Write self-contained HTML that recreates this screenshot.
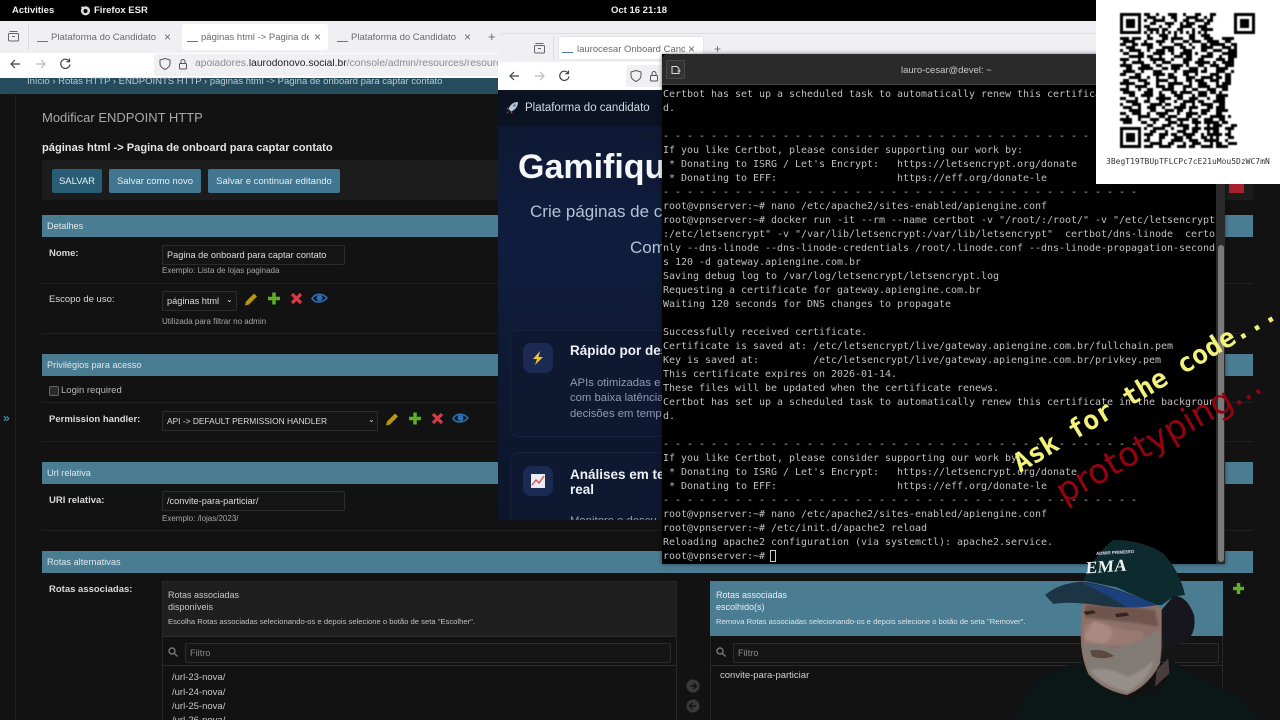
<!DOCTYPE html>
<html lang="pt"><head><meta charset="utf-8"><title>Desktop</title>
<style>
html,body{margin:0;padding:0;width:1280px;height:720px;overflow:hidden;background:#121212}
body{position:relative;font-family:"Liberation Sans",sans-serif;color:#ddd}
.a,.b{position:absolute}
.t{position:absolute;white-space:nowrap;line-height:1;margin-top:1px}
.bar{position:absolute;left:42px;width:1211px;height:22px;background:#4a7c92}
.bar .t{left:5px;top:6px;font-size:9.2px;color:#dfe8ec}
.lab{font-size:9.5px;color:#d8d8d8}
.bold{font-weight:bold}
.hlp{font-size:8px;color:#a8a8a8}
.inp{position:absolute;height:18px;border:1px solid #2c2c2c;background:#151515;border-radius:2px;font-size:9.2px;color:#ddd;line-height:18px;padding-left:4px;box-sizing:content-box;white-space:nowrap;overflow:hidden}
.btn{position:absolute;top:169px;height:24px;background:#417690;border-radius:2px;color:#e8eef1;font-size:9.5px;line-height:26px;text-align:center}
.line{position:absolute;left:42px;width:1211px;height:1px;background:#1f1f1f}
.tab{position:absolute;font-size:9.5px;color:#6a6a70;white-space:nowrap}
.term{position:absolute;left:663px;top:88px;width:552px;height:476px;overflow:hidden;font:10px/14px "DejaVu Sans Mono","Liberation Mono",monospace;letter-spacing:-.02px;color:#bfbfbf;white-space:pre;filter:blur(.25px)}
.ul{position:absolute;width:11px;height:1px;background:#4a7ea8}
</style></head><body>

<!-- admin page background -->
<div class="a" style="left:0;top:94px;width:1280px;height:626px;background:#121212"></div>
<div class="a" style="left:15px;top:94px;width:1px;height:626px;background:#1e1e1e"></div>
<div class="t" style="left:3px;top:411px;font-size:12px;color:#5fb4d6">»</div>

<!-- top bar -->
<div class="a" style="left:0;top:0;width:1280px;height:21px;background:#000"></div>
<div class="t bold" style="left:12px;top:5px;font-size:9.5px;color:#eee">Activities</div>
<svg class="a" style="left:80px;top:5px" width="11" height="11" viewBox="0 0 11 11"><circle cx="5.5" cy="5.8" r="4.6" fill="#ddd"/><circle cx="5.5" cy="6" r="2" fill="#000"/><path d="M2 1l2 2H1z" fill="#ddd"/></svg>
<div class="t bold" style="left:94px;top:5px;font-size:9.5px;color:#eee">Firefox ESR</div>
<div class="t bold" style="left:611px;top:5px;font-size:9.5px;color:#eee">Oct 16 21:18</div>

<!-- firefox window 1 chrome -->
<div class="a" style="left:0;top:21px;width:1096px;height:32px;background:#f0f0f4"></div>
<div class="a" style="left:0;top:53px;width:500px;height:25px;background:#fff"></div>
<div class="a" style="left:182px;top:24px;width:146px;height:26px;background:#fff;border-radius:3px"></div>
<svg class="a" style="left:7px;top:30px" width="13" height="12" viewBox="0 0 13 12" fill="none" stroke="#666"><rect x="1.5" y="3.5" width="10" height="7.5" rx="1"/><path d="M2.5 1.5h8M5 6.5h3"/></svg>
<div class="a" style="left:28px;top:24px;width:1px;height:26px;background:#dcdce0"></div>
<div class="ul" style="left:37px;top:41px"></div><div class="tab" style="left:51px;top:32px">Plataforma do Candidato</div><div class="tab" style="left:164px;top:30px;font-size:12px">×</div>
<div class="ul" style="left:187px;top:41px"></div><div class="tab" style="left:201px;top:32px;width:108px;overflow:hidden">páginas html -&gt; Pagina de</div><div class="tab" style="left:314px;top:30px;font-size:12px">×</div>
<div class="ul" style="left:337px;top:41px"></div><div class="tab" style="left:351px;top:32px">Plataforma do Candidato</div><div class="tab" style="left:464px;top:30px;font-size:12px">×</div>
<div class="tab" style="left:488px;top:29px;font-size:13px">+</div>
<svg class="a" style="left:9px;top:57px" width="64" height="14" viewBox="0 0 64 14" fill="none" stroke-width="1.2"><path d="M11 7H2M6 3L2 7l4 4" stroke="#444"/><path d="M36 7h-9M32 3l4 4-4 4" stroke="#bbb"/><path d="M60 4a4.6 4.6 0 1 0 .9 3.5M60.5 1.5v3.2h-3.2" stroke="#444"/></svg>
<div class="a" style="left:154px;top:54px;width:346px;height:22px;background:#f0f0f4;border-radius:3px"></div>
<svg class="a" style="left:159px;top:57px" width="30" height="14" viewBox="0 0 30 14" fill="none" stroke="#555"><path d="M6 1.5l5 1.5v4c0 3-3 4.5-5 5.5-2-1-5-2.5-5-5.5V3z"/><rect x="20.5" y="6.5" width="7" height="5.5" rx="1"/><path d="M22 6.5V4.5a2 2 0 0 1 4 0v2"/></svg>
<div class="t" style="left:195px;top:58px;font-size:10.3px;color:#8a8a90;width:305px;overflow:hidden">apoiadores.<span style="color:#222">laurodonovo.social.br</span>/console/admin/resources/resource</div>

<!-- breadcrumb -->
<div class="a" style="left:0;top:78px;width:500px;height:16px;background:#264b5d"></div>
<div class="t" style="left:27px;top:76px;font-size:9.5px;color:#b6cbd6">Início › Rotas HTTP › ENDPOINTS HTTP › páginas html -&gt; Pagina de onboard para captar contato</div>

<!-- admin content -->
<div class="t" style="left:42px;top:110px;font-size:13px;color:#a9a9a9">Modificar ENDPOINT HTTP</div>
<div class="t bold" style="left:42px;top:142px;font-size:11.1px;color:#e4e4e4">páginas html -&gt; Pagina de onboard para captar contato</div>
<div class="a" style="left:42px;top:160px;width:1211px;height:40px;background:#1c1c1c"></div>
<div class="btn" style="left:52px;width:50px;background:#275d75">SALVAR</div>
<div class="btn" style="left:109px;width:92px">Salvar como novo</div>
<div class="btn" style="left:208px;width:132px">Salvar e continuar editando</div>
<div class="a" style="left:1229px;top:184px;width:15px;height:9px;background:#a8202c"></div>

<div class="bar" style="top:215px"><div class="t">Detalhes</div></div>
<div class="t lab bold" style="left:49px;top:248px">Nome:</div>
<div class="inp" style="left:162px;top:245px;width:177px">Pagina de onboard para captar contato</div>
<div class="t hlp" style="left:162px;top:266px">Exemplo: Lista de lojas paginada</div>
<div class="line" style="top:283px"></div>
<div class="t lab" style="left:49px;top:294px">Escopo de uso:</div>
<div class="inp" style="left:162px;top:291px;width:69px">páginas html<span style="position:absolute;left:63px;top:-1px;font-size:8px">⌄</span></div>
<div class="t hlp" style="left:162px;top:317px">Utilizada para filtrar no admin</div>
<div class="line" style="top:333px"></div>

<div class="bar" style="top:354px"><div class="t">Privilégios para acesso</div></div>
<div class="a" style="left:49px;top:386px;width:8px;height:8px;border:1px solid #666;border-radius:2px;background:#2a2a2a"></div>
<div class="t lab" style="left:61px;top:385px;color:#b8b8b8">Login required</div>
<div class="line" style="top:402px"></div>
<div class="t lab bold" style="left:49px;top:414px">Permission handler:</div>
<div class="inp" style="left:162px;top:411px;width:210px;font-size:8.4px">API -&gt; DEFAULT PERMISSION HANDLER<span style="position:absolute;left:205px;top:-1px;font-size:8px">⌄</span></div>
<div class="line" style="top:441px"></div>

<div class="bar" style="top:462px"><div class="t">Url relativa</div></div>
<div class="t lab bold" style="left:49px;top:495px">URI relativa:</div>
<div class="inp" style="left:162px;top:491px;width:177px">/convite-para-particiar/</div>
<div class="t hlp" style="left:162px;top:514px">Exemplo: /lojas/2023/</div>
<div class="line" style="top:530px"></div>

<div class="bar" style="top:551px"><div class="t">Rotas alternativas</div></div>
<div class="t lab bold" style="left:49px;top:584px">Rotas associadas:</div>

<!-- selector left -->
<div class="a" style="left:162px;top:581px;width:515px;height:139px;background:#121212;border:1px solid #272727;border-bottom:0;box-sizing:border-box"></div>
<div class="a" style="left:163px;top:582px;width:513px;height:54px;background:#1f1f1f"></div>
<div class="t" style="left:168px;top:590px;font-size:9px;color:#c8c8c8">Rotas associadas</div>
<div class="t" style="left:168px;top:602px;font-size:9px;color:#c8c8c8">disponíveis</div>
<div class="t" style="left:168px;top:617px;font-size:7.65px;color:#c0c0c0">Escolha Rotas associadas selecionando-os e depois selecione o botão de seta "Escolher".</div>
<div class="a" style="left:163px;top:636px;width:513px;height:1px;background:#2c2c2c"></div>
<div class="a" style="left:163px;top:665px;width:513px;height:1px;background:#2c2c2c"></div>
<svg class="a" style="left:168px;top:647px" width="10" height="10" viewBox="0 0 10 10" fill="none" stroke="#777" stroke-width="1.4"><circle cx="4" cy="4" r="3"/><path d="M6.5 6.5L9.5 9.5"/></svg>
<div class="inp" style="left:185px;top:643px;width:480px;color:#888">Filtro</div>
<div class="t" style="left:172px;top:672px;font-size:9.5px;color:#c8c8c8">/url-23-nova/</div>
<div class="t" style="left:172px;top:687px;font-size:9.5px;color:#c8c8c8">/url-24-nova/</div>
<div class="t" style="left:172px;top:701px;font-size:9.5px;color:#c8c8c8">/url-25-nova/</div>
<div class="t" style="left:172px;top:715px;font-size:9.5px;color:#c8c8c8">/url-26-nova/</div>

<svg class="a" style="left:686px;top:679px" width="14" height="35" viewBox="0 0 14 35"><circle cx="7" cy="7" r="6.5" fill="#3a3a3a"/><circle cx="7" cy="27" r="6.5" fill="#3a3a3a"/><path d="M4 7h6M7.5 4l3 3-3 3M10 27H4M6.5 24l-3 3 3 3" stroke="#121212" stroke-width="1.5" fill="none"/></svg>

<!-- selector right -->
<div class="a" style="left:710px;top:581px;width:513px;height:139px;background:#121212;border:1px solid #272727;border-bottom:0;box-sizing:border-box"></div>
<div class="a" style="left:710px;top:581px;width:513px;height:55px;background:#4a7c92"></div>
<div class="t" style="left:716px;top:590px;font-size:9px;color:#eaf0f3">Rotas associadas</div>
<div class="t" style="left:716px;top:602px;font-size:9px;color:#eaf0f3">escolhido(s)</div>
<div class="t" style="left:716px;top:617px;font-size:7.65px;color:#dce6ea">Remova Rotas associadas selecionando-os e depois selecione o botão de seta "Remover".</div>
<div class="a" style="left:711px;top:665px;width:512px;height:1px;background:#2c2c2c"></div>
<svg class="a" style="left:716px;top:647px" width="10" height="10" viewBox="0 0 10 10" fill="none" stroke="#777" stroke-width="1.4"><circle cx="4" cy="4" r="3"/><path d="M6.5 6.5L9.5 9.5"/></svg>
<div class="inp" style="left:733px;top:643px;width:480px;color:#888">Filtro</div>
<div class="t" style="left:720px;top:670px;font-size:9.5px;color:#d0d0d0">convite-para-particiar</div>

<!-- action icons -->
<svg class="a" style="left:0;top:0" width="1280" height="720" viewBox="0 0 1280 720">
<defs>
<g id="acts">
<path d="M-6 7l1-4 8-8 3 3-8 8z" fill="#b8960f"/>
<path d="M17 0h12M23 -6v12" stroke="#5fae28" stroke-width="3.5"/>
<path d="M41 -4.5l9 9M50 -4.5l-9 9" stroke="#d83a45" stroke-width="3.3"/>
<path d="M61 0c3-5 10-6 15-.5 -5 5.5-12 5-15 .5z" fill="none" stroke="#2a70b8" stroke-width="1.6"/><circle cx="68.5" cy="-.5" r="3" fill="#2a70b8"/>
</g></defs>
<use href="#acts" x="251" y="298.5"/>
<use href="#acts" x="392" y="418.5"/>
<path d="M1238.5 583v11M1233 588.5h11" stroke="#5fae28" stroke-width="3.5"/>
</svg>

<!-- firefox window 2 -->
<div class="a" style="left:498px;top:33px;width:598px;height:29px;background:#f0f0f4;border-radius:6px 0 0 0;border-top:1px solid #e0e0e4;box-sizing:border-box"></div>
<div class="a" style="left:498px;top:62px;width:598px;height:28px;background:#fff"></div>
<div class="a" style="left:558px;top:36px;width:146px;height:24px;background:#fff;border:1px solid #e6e6ea;border-radius:3px;box-sizing:border-box"></div>
<div class="a" style="left:553px;top:36px;width:1px;height:24px;background:#dcdce0"></div>
<svg class="a" style="left:533px;top:42px" width="13" height="12" viewBox="0 0 13 12" fill="none" stroke="#666"><rect x="1.5" y="3.5" width="10" height="7.5" rx="1"/><path d="M2.5 1.5h8M5 6.5h3"/></svg>
<div class="ul" style="left:562px;top:52px"></div>
<div class="tab" style="left:577px;top:44px;width:108px;overflow:hidden">laurocesar Onboard Candi</div>
<div class="tab" style="left:688px;top:42px;font-size:12px">×</div>
<div class="tab" style="left:714px;top:42px;font-size:12px">+</div>
<svg class="a" style="left:508px;top:69px" width="64" height="14" viewBox="0 0 64 14" fill="none" stroke-width="1.2"><path d="M11 7H2M6 3L2 7l4 4" stroke="#444"/><path d="M36 7h-9M32 3l4 4-4 4" stroke="#bbb"/><path d="M60 4a4.6 4.6 0 1 0 .9 3.5M60.5 1.5v3.2h-3.2" stroke="#444"/></svg>
<div class="a" style="left:626px;top:65px;width:40px;height:22px;background:#f0f0f4;border-radius:3px"></div>
<svg class="a" style="left:630px;top:69px" width="32" height="14" viewBox="0 0 32 14" fill="none" stroke="#555"><path d="M6 1.5l5 1.5v4c0 3-3 4.5-5 5.5-2-1-5-2.5-5-5.5V3z"/><rect x="20.5" y="6.5" width="7" height="5.5" rx="1"/><path d="M22 6.5V4.5a2 2 0 0 1 4 0v2"/></svg>

<!-- onboarding page -->
<div class="a" style="left:498px;top:90px;width:170px;height:430px;background:linear-gradient(180deg,#0d1730 0%,#101d3e 35%,#0d1830 70%,#0c152b 100%)"></div>
<div class="a" style="left:498px;top:90px;width:170px;height:36px;background:#0b1222"></div>
<svg class="a" style="left:505px;top:101px" width="14" height="14" viewBox="0 0 14 14"><path d="M13 1C8 1 5 4 3.5 8l2.5 2.5C10 9 13 6 13 1z" fill="#b9c4d4"/><circle cx="9.5" cy="4.5" r="1.3" fill="#4a7cb8"/><path d="M3.5 8L1 8.5 3 6zM6 10.5L5.5 13 8 11z" fill="#c03838"/><path d="M3 10.5L1 13l2.5-2z" fill="#e8902a"/></svg>
<div class="t" style="left:525px;top:102px;font-size:11.5px;color:#d3dae6">Plataforma do candidato</div>
<div class="t bold" style="left:518px;top:149px;font-size:34px;color:#f4f6fa;width:144px;overflow:hidden;line-height:40px;margin-top:-2px">Gamifique</div>
<div class="t" style="left:530px;top:202px;font-size:17px;color:#b5c1d6;width:132px;overflow:hidden;line-height:18px">Crie páginas de captura</div>
<div class="t" style="left:630px;top:238px;font-size:17px;color:#b5c1d6;width:32px;overflow:hidden;line-height:18px">Com</div>

<div class="a" style="left:510px;top:330px;width:170px;height:107px;background:#0e1830;border:1px solid #17223c;border-radius:8px;box-sizing:border-box"></div>
<div class="a" style="left:523px;top:343px;width:30px;height:30px;background:#1b2a52;border-radius:8px"></div>
<svg class="a" style="left:532px;top:351px" width="12" height="14" viewBox="0 0 12 14"><path d="M8 0L1 8h4l-2 6 8-8H6.5z" fill="#f2c230"/></svg>
<div class="t bold" style="left:570px;top:343px;font-size:13.5px;color:#eef1f6;width:92px;overflow:hidden">Rápido por design</div>
<div class="t" style="left:570px;top:377px;font-size:11.3px;color:#8e9bb2;width:92px;overflow:hidden">APIs otimizadas e</div>
<div class="t" style="left:570px;top:392px;font-size:11.3px;color:#8e9bb2;width:92px;overflow:hidden">com baixa latência</div>
<div class="t" style="left:570px;top:408px;font-size:11.3px;color:#8e9bb2;width:92px;overflow:hidden">decisões em tempo</div>

<div class="a" style="left:510px;top:452px;width:170px;height:68px;background:#0e1830;border:1px solid #17223c;border-bottom:0;border-radius:8px 8px 0 0;box-sizing:border-box"></div>
<div class="a" style="left:523px;top:466px;width:30px;height:30px;background:#1b2a52;border-radius:8px"></div>
<svg class="a" style="left:531px;top:474px" width="14" height="14" viewBox="0 0 14 14"><rect width="14" height="14" fill="#e8ecf2"/><path d="M1 11l4-5 3 3 5-7" fill="none" stroke="#d8484e" stroke-width="1.3"/></svg>
<div class="t bold" style="left:570px;top:467px;font-size:13.5px;color:#eef1f6;width:92px;overflow:hidden">Análises em tempo</div>
<div class="t bold" style="left:570px;top:482px;font-size:13.5px;color:#eef1f6">real</div>
<div class="a" style="left:498px;top:514px;width:164px;height:6px;overflow:hidden"><div class="t" style="left:72px;top:1px;font-size:11.3px;color:#8e9bb2">Monitore e descu</div></div>

<!-- terminal -->
<div class="a" style="left:662px;top:54px;width:563px;height:510px;background:#000;box-shadow:0 0 4px rgba(0,0,0,.5)"></div>
<div class="a" style="left:662px;top:54px;width:563px;height:31px;background:#2a2a2a;border-bottom:1px solid #444;box-sizing:border-box;border-radius:6px 6px 0 0"></div>
<div class="a" style="left:666px;top:60px;width:19px;height:19px;background:#333;border:1px solid #484848;box-sizing:border-box;border-radius:2px"></div>
<svg class="a" style="left:671px;top:65px" width="10" height="10" viewBox="0 0 10 10" fill="none" stroke="#ddd"><path d="M1 1.5h5l2 2v5H1zM6.5 6h3M8 4.5v3"/></svg>
<div class="t" style="left:901px;top:65px;font-size:9.5px;color:#c8c8c8">lauro-cesar@devel: ~</div>
<div class="a" style="left:1216px;top:85px;width:9px;height:479px;background:#2a2a2a"></div>
<div class="a" style="left:1218px;top:245px;width:6px;height:317px;background:#7a7a7a;border-radius:3px"></div>
<div class="term">Certbot has set up a scheduled task to automatically renew this certificate in the background
d.

- - - - - - - - - - - - - - - - - - - - - - - - - - - - - - - - - - - - - - - -
If you like Certbot, please consider supporting our work by:
 * Donating to ISRG / Let's Encrypt:   https://letsencrypt.org/donate
 * Donating to EFF:                    https://eff.org/donate-le
- - - - - - - - - - - - - - - - - - - - - - - - - - - - - - - - - - - - - - - -
root@vpnserver:~# nano /etc/apache2/sites-enabled/apiengine.conf
root@vpnserver:~# docker run -it --rm --name certbot -v "/root/:/root/" -v "/etc/letsencrypt
:/etc/letsencrypt" -v "/var/lib/letsencrypt:/var/lib/letsencrypt"  certbot/dns-linode  certo
nly --dns-linode --dns-linode-credentials /root/.linode.conf --dns-linode-propagation-second
s 120 -d gateway.apiengine.com.br
Saving debug log to /var/log/letsencrypt/letsencrypt.log
Requesting a certificate for gateway.apiengine.com.br
Waiting 120 seconds for DNS changes to propagate

Successfully received certificate.
Certificate is saved at: /etc/letsencrypt/live/gateway.apiengine.com.br/fullchain.pem
Key is saved at:         /etc/letsencrypt/live/gateway.apiengine.com.br/privkey.pem
This certificate expires on 2026-01-14.
These files will be updated when the certificate renews.
Certbot has set up a scheduled task to automatically renew this certificate in the background
d.

- - - - - - - - - - - - - - - - - - - - - - - - - - - - - - - - - - - - - - - -
If you like Certbot, please consider supporting our work by:
 * Donating to ISRG / Let's Encrypt:   https://letsencrypt.org/donate
 * Donating to EFF:                    https://eff.org/donate-le
- - - - - - - - - - - - - - - - - - - - - - - - - - - - - - - - - - - - - - - -
root@vpnserver:~# nano /etc/apache2/sites-enabled/apiengine.conf
root@vpnserver:~# /etc/init.d/apache2 reload
Reloading apache2 configuration (via systemctl): apache2.service.
root@vpnserver:~# </div>
<div class="a" style="left:770px;top:550px;width:6px;height:12px;border:1px solid #ccc;box-sizing:border-box"></div>

<!-- QR overlay -->
<div class="a" style="left:1096px;top:0;width:184px;height:184px;background:#fff"></div>
<svg class="a" style="left:1120px;top:13px;filter:blur(.4px)" width="135" height="135" viewBox="0 0 45 45">
<path stroke="#000" stroke-width="1" fill="none" d="
M8 .5h2m2 0h1m3 0h3m2 0h1m3 0h2m3 0h2
M9 1.5h3m2 0h1m2 0h2m3 0h4m2 0h1m1 0h1
M8 2.5h1m2 0h4m3 0h1m2 0h2m2 0h3m1 0h2
M10 3.5h2m3 0h3m2 0h1m1 0h3m3 0h2
M8 4.5h2m3 0h1m2 0h1m3 0h4m2 0h3
M9 5.5h4m1 0h2m3 0h2m3 0h1m2 0h4
M8 6.5h1m1 0h1m1 0h1m1 0h1m1 0h1m1 0h1m1 0h1m1 0h1m1 0h1m1 0h1m1 0h1
M9 7.5h1m3 0h3m2 0h1m4 0h2m2 0h3
M0 8.5h3m1 0h3m2 0h2m3 0h2m1 0h4m2 0h2m3 0h3m3 0h4
M1 9.5h4m3 0h1m3 0h3m2 0h1m3 0h2m1 0h3m2 0h4m2 0h2
M0 10.5h2m2 0h2m1 0h4m2 0h1m4 0h3m2 0h1m3 0h2m1 0h5m2 0h2
M2 11.5h3m4 0h2m3 0h4m2 0h2m2 0h1m2 0h4m3 0h3m1 0h1
M0 12.5h1m2 0h4m2 0h1m2 0h3m1 0h2m3 0h3m3 0h2m2 0h3m2 0h3
M1 13.5h2m3 0h2m3 0h4m2 0h1m2 0h4m1 0h1m3 0h2m3 0h5
M3 14.5h5m1 0h2m2 0h1m4 0h3m1 0h2m3 0h4m2 0h1m2 0h3
M0 15.5h3m3 0h1m3 0h5m2 0h1m3 0h3m2 0h2m4 0h3m1 0h2
M1 16.5h1m2 0h4m3 0h1m2 0h3m4 0h2m2 0h5m1 0h1m2 0h4
M0 17.5h4m3 0h3m2 0h2m3 0h4m1 0h1m3 0h2m2 0h3m2 0h3
M2 18.5h2m2 0h5m3 0h2m1 0h3m3 0h3m2 0h1m3 0h4
M1 19.5h4m2 0h1m3 0h3m4 0h1m2 0h5m1 0h2m3 0h3m2 0h1
M0 20.5h2m3 0h2m4 0h4m1 0h2m3 0h2m2 0h1m4 0h3m2 0h2
M3 21.5h4m2 0h1m2 0h1m3 0h3m3 0h3m2 0h4m1 0h2m1 0h2
M1 22.5h2m3 0h3m3 0h4m2 0h1m3 0h2m1 0h3m2 0h3m2 0h2
M0 23.5h5m3 0h2m2 0h1m3 0h5m2 0h1m2 0h3m3 0h1m1 0h3
M2 24.5h1m2 0h4m3 0h3m1 0h2m3 0h3m2 0h4m2 0h4
M0 25.5h3m3 0h1m2 0h2m3 0h4m3 0h1m2 0h2m3 0h3m2 0h2
M1 26.5h4m3 0h3m2 0h1m3 0h2m1 0h4m2 0h3m1 0h2m1 0h1
M3 27.5h2m2 0h4m2 0h2m3 0h3m3 0h1m1 0h3m3 0h4
M0 28.5h2m3 0h1m3 0h1m2 0h5m2 0h2m2 0h3m3 0h1m2 0h3
M2 29.5h4m2 0h2m3 0h2m3 0h1m2 0h4m1 0h2m3 0h4
M0 30.5h1m3 0h3m3 0h4m1 0h2m3 0h2m2 0h1m2 0h4m2 0h2
M1 31.5h3m2 0h1m2 0h3m2 0h1m3 0h4m1 0h3m3 0h2m1 0h3
M3 32.5h4m3 0h2m3 0h3m1 0h2m2 0h1m3 0h3m2 0h4
M0 33.5h2m2 0h3m2 0h1m2 0h4m3 0h1m2 0h4m1 0h2m3 0h2
M2 34.5h1m3 0h4m3 0h2m1 0h3m3 0h2m2 0h1m3 0h5m1 0h1
M0 35.5h4m2 0h1m3 0h3m2 0h2m2 0h4m1 0h2m2 0h3m2 0h2
M1 36.5h3m3 0h2m2 0h1m4 0h3m1 0h1m3 0h3m1 0h5m1 0h2
M9 37.5h2m3 0h3m2 0h4m2 0h1m3 0h1m1 0h3m3 0h2
M8 38.5h1m2 0h4m2 0h1m3 0h2m1 0h3m1 0h5m2 0h3
M10 39.5h2m3 0h1m3 0h3m2 0h2m3 0h1m1 0h2m3 0h1
M8 40.5h3m2 0h3m1 0h2m2 0h4m2 0h1m1 0h5m1 0h2
M9 41.5h1m3 0h2m3 0h3m1 0h2m3 0h2m1 0h1m1 0h1m3 0h2
M8 42.5h2m3 0h1m3 0h4m2 0h3m2 0h5m2 0h1
M10 43.5h4m2 0h2m3 0h1m2 0h3m3 0h1m1 0h2m2 0h3
M8 44.5h3m2 0h4m2 0h3m1 0h2m2 0h4m1 0h4"/>
<g fill="none" stroke="#000" stroke-width="1"><rect x=".5" y=".5" width="6" height="6"/><rect x="38.5" y=".5" width="6" height="6"/><rect x=".5" y="38.5" width="6" height="6"/></g>
<rect x="2" y="2" width="3" height="3"/><rect x="40" y="2" width="3" height="3"/><rect x="2" y="40" width="3" height="3"/>
</svg>
<div class="t" style="left:1106px;top:157px;font:8px/1 'DejaVu Sans Mono','Liberation Mono',monospace;color:#333">3BegT19TBUpTFLCPc7cE21uMou5DzWC7mN</div>

<!-- webcam person -->
<svg class="a" style="left:0;top:0" width="1280" height="720" viewBox="0 0 1280 720">
<defs>
<filter id="s1" x="-20%" y="-20%" width="140%" height="140%"><feGaussianBlur stdDeviation=".8"/></filter>
<filter id="s2" x="-20%" y="-20%" width="140%" height="140%"><feGaussianBlur stdDeviation="3"/></filter>
</defs>
<g transform="translate(1040,530) scale(.33333)">
<g filter="url(#s1)">
<path d="M-85 570L-20 455 70 410 135 395 200 470 270 510 370 470 385 385 470 440 600 500 660 570Z" fill="#0a1513"/>
<path d="M130 215Q118 290 124 350 128 395 145 432 190 482 260 495 325 470 360 400 368 330 365 235L350 225 230 185Z" fill="#8c7068"/>
<path d="M350 420L385 385 388 430 345 470Z" fill="#4a3e3a"/>
<path d="M365 240L400 198Q440 195 462 255 470 310 440 330 400 358 365 350Z" fill="#14181c"/>
</g>
<g filter="url(#s2)">
<path d="M135 225Q230 225 345 240L355 290 300 280 135 262Z" fill="#6f544d"/>
<path d="M130 290Q170 262 220 290 280 310 305 300L320 340 250 345 135 350Z" fill="#987a72"/>
<path d="M160 272Q200 280 215 300 220 330 190 340 150 340 132 322Z" fill="#a88a80"/>
<path d="M125 345Q175 335 215 355 290 345 358 298 370 360 353 405 320 468 260 490 190 476 148 430 128 390Z" fill="#827a75"/>
<path d="M150 422Q200 405 260 440 320 420 342 385 335 440 265 486 195 472 150 422Z" fill="#968e88"/>
</g>
<g filter="url(#s1)">
<path d="M150 362Q185 352 222 378 190 390 156 380Z" fill="#5c4840"/>
<path d="M130 245l30-4 8 8-30 6zM225 252l35-5 8 10-38 5z" fill="#322622"/>
<path d="M130 152Q165 70 220 30 300 28 370 70 420 125 435 195L400 200 365 225 350 225 230 172Z" fill="#0f2a2e"/>
<path d="M15 195Q60 158 130 155 230 170 350 225 270 238 190 228 90 212 40 222Z" fill="#1c3644"/>
<path d="M125 158Q230 172 352 225 300 235 260 232 195 190 125 158Z" fill="#1b3f7c"/>
</g>
</g>
</svg>
<div class="t bold" style="left:1086px;top:557px;font-size:17px;letter-spacing:.5px;color:#eef2f4;transform:rotate(-4deg) skewX(-8deg);font-family:'Liberation Serif',serif">EMA</div>
<div class="t bold" style="left:1096px;top:550px;font-size:4.5px;color:#dde;transform:rotate(-3deg)">ADMIR PRIMEIRO</div>

<!-- overlay captions -->
<svg class="a" style="left:0;top:0" width="1280" height="720" viewBox="0 0 1280 720">
<text transform="translate(1064,504) rotate(-29.5)" font-family="DejaVu Sans,sans-serif" font-size="34" fill="#960210">prototyping...</text>
<text transform="translate(1020,473) rotate(-31)" font-family="DejaVu Sans Mono,monospace" font-weight="bold" font-size="26.4" fill="#f2f27a">Ask for the code...</text>
</svg>

</body></html>
